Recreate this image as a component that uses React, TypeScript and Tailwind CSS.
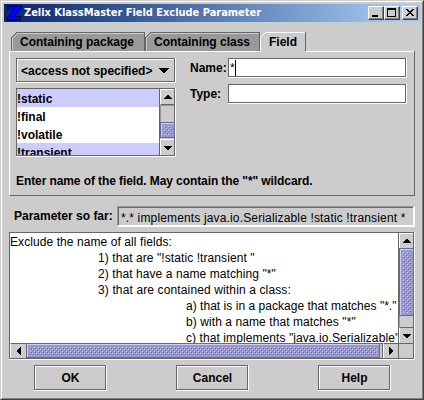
import type { ReactNode } from "react";

type Dir = "up" | "down" | "left" | "right";

const arrowRows = [2, 4, 6, 8];

function Arrow({ dir }: { dir: Dir }) {
  const vertical = dir === "up" || dir === "down";
  const w = vertical ? 8 : 4;
  const h = vertical ? 4 : 8;
  return (
    <svg width={w} height={h} viewBox={`0 0 ${w} ${h}`} shapeRendering="crispEdges">
      {arrowRows.map((size, i) => {
        const along = dir === "up" || dir === "left" ? i : 3 - i;
        const across = (8 - size) / 2;
        return vertical ? (
          <rect key={i} x={across} y={along} width={size} height={1} />
        ) : (
          <rect key={i} x={along} y={across} width={1} height={size} />
        );
      })}
    </svg>
  );
}

function ScrollButton({ dir, className }: { dir: Dir; className: string }) {
  return (
    <div className={`flex shrink-0 items-center justify-center border-t border-l border-white bg-[#cccccc] ${className}`}>
      <Arrow dir={dir} />
    </div>
  );
}

function Thumb({ id, className, inset }: { id: string; className: string; inset: string }) {
  return (
    <div className={`shrink-0 border border-[#666699] ${className}`}>
      <div className={`h-full w-full border-t border-l border-[#ccccff] bg-[#9999cc] ${inset}`}>
        <svg className="block h-full w-full" shapeRendering="crispEdges">
          <defs>
            <pattern id={id} width="4" height="4" patternUnits="userSpaceOnUse">
              <rect x="0" y="0" width="1" height="1" fill="#ccccff" />
              <rect x="2" y="2" width="1" height="1" fill="#ccccff" />
              <rect x="1" y="1" width="1" height="1" fill="#666699" />
              <rect x="3" y="3" width="1" height="1" fill="#666699" />
            </pattern>
          </defs>
          <rect width="100%" height="100%" fill={`url(#${id})`} />
        </svg>
      </div>
    </div>
  );
}

function Caption({ children, gap = "" }: { children: ReactNode; gap?: string }) {
  return (
    <div className={`flex h-[14px] w-4 shrink-0 items-center justify-center border border-t-white border-l-white border-r-[#404040] border-b-[#404040] bg-[#cccccc] shadow-[inset_-1px_-1px_0_#808080] ${gap}`}>
      <svg width="12" height="10" viewBox="0 0 12 10" shapeRendering="crispEdges">
        {children}
      </svg>
    </div>
  );
}

function Tab({ label, width, active = false }: { label: string; width: string; active?: boolean }) {
  return (
    <div className={`relative h-[19px] shrink-0 ${width}`}>
      <svg className="absolute inset-0 h-full w-full" shapeRendering="crispEdges">
        <rect x="6" y="0" width="100%" height="20" fill={active ? "#cccccc" : "#999999"} />
        <path d="M0 20V6L6 0V20Z" fill={active ? "#cccccc" : "#999999"} />
        <path d="M0.5 20V5.5L5.5 0.5" fill="none" stroke={active ? "#ffffff" : "#666666"} />
        <rect x="5" y="0" width="100%" height="1" fill={active ? "#ffffff" : "#666666"} />
        {!active && <path d="M1.5 20V6.5L6.5 1.5H200" fill="none" stroke="#cccccc" />}
      </svg>
      <div className="absolute top-0 right-0 h-[19px] w-px bg-[#666666]" />
      <div className="relative pl-[9px] leading-[20px]">{label}</div>
    </div>
  );
}

function TextField({ children }: { children?: ReactNode }) {
  return (
    <div className="h-5 w-[179px] border-r border-b border-white">
      <div className="flex h-[19px] items-center border border-[#666666] bg-white pl-px font-normal">{children}</div>
    </div>
  );
}

function PushButton({ label }: { label: string }) {
  return (
    <div className="h-[26px] w-[73px] border-r border-b border-white">
      <div className="h-[25px] border border-[#666666]">
        <div className="h-[23px] border-t border-l border-white text-center leading-[23px]">{label}</div>
      </div>
    </div>
  );
}

const modifiers = [
  { name: "!static", selected: true },
  { name: "!final", selected: false },
  { name: "!volatile", selected: false },
  { name: "!transient", selected: true },
];

const description = [
  { text: "Exclude the name of all fields:", indent: "pl-0" },
  { text: '1) that are "!static !transient "', indent: "pl-[88px]" },
  { text: '2) that have a name matching "*"', indent: "pl-[88px]" },
  { text: "3) that are contained within a class:", indent: "pl-[88px] tracking-[0.13px]" },
  { text: 'a) that is in a package that matches "*."', indent: "pl-[176px] tracking-[0.03px]" },
  { text: 'b) with a name that matches "*"', indent: "pl-[176px]" },
  { text: 'c) that implements "java.io.Serializable"', indent: "pl-[176px]" },
];

export default function App() {
  return (
    <div className="h-[400px] w-[424px] overflow-hidden border-t border-r border-b border-l border-t-[#cccccc] border-r-[#404040] border-b-[#404040] border-l-[#cccccc] bg-[#cccccc] font-['Liberation_Sans',Arial,sans-serif] text-[12px] font-bold whitespace-nowrap text-black">
      <div className="flex h-[398px] flex-col border border-t-white border-r-[#808080] border-b-[#808080] border-l-white pt-[2px]">
        <div className="mx-[2px] flex h-[18px] shrink-0 items-center bg-linear-to-r from-[#0a246a] to-[#a6caf0] to-95% pr-[2px] pl-[2px]">
          <svg className="shrink-0" width="17" height="16" viewBox="0 0 17 16">
            <path d="M1.5 0.8H15.2V3.6L8.2 11.4H14.4V15.2H1V12.4L8.4 4.4H1.5Z" fill="#0000ff" stroke="#000000" strokeWidth="0.8" />
          </svg>
          <span className="grow pl-px font-['DejaVu_Sans_Condensed','DejaVu_Sans',sans-serif] text-[11px] leading-[18px] tracking-[-0.03px] text-white">
            Zelix KlassMaster Field Exclude Parameter
          </span>
          <Caption>
            <rect x="2" y="7" width="6" height="2" />
          </Caption>
          <Caption>
            <path d="M1 0H10V9H1ZM2 2V8H9V2Z" fillRule="evenodd" />
          </Caption>
          <Caption gap="ml-[2px]">
            <path d="M2 1h2v1h1v1h2v-1h1v-1h2v1h-1v1h-1v1h-1v1h1v1h1v1h1v1h-2v-1h-1v-1h-2v1h-1v1h-2v-1h1v-1h1v-1h1v-1h-1v-1h-1v-1h-1z" />
          </Caption>
        </div>

        <div className="mt-[10px] ml-[9px] flex shrink-0">
          <Tab label="Containing package" width="w-[134px]" />
          <Tab label="Containing class" width="w-[115px]" />
          <Tab label="Field" width="w-[46px]" active />
        </div>

        <div className="ml-[7px] flex h-[145px] w-[406px] shrink-0 flex-col border-r border-b border-l border-r-[#666666] border-b-[#666666] border-l-white">
          <div className="flex h-px shrink-0">
            <div className="w-[251px] bg-white" />
            <div className="w-[45px]" />
            <div className="grow bg-white" />
          </div>
          <div className="flex pt-[6px] pl-[6px]">
            <div className="w-[160px]">
              <div className="h-[25px] border-r border-b border-white">
                <div className="h-6 border border-[#666666]">
                  <div className="flex h-[22px] items-center justify-between border-t border-l border-white pr-[5px] pl-[3px]">
                    <span className="leading-[22px]">&lt;access not specified&gt;</span>
                    <svg width="10" height="5" viewBox="0 0 10 5" shapeRendering="crispEdges">
                      <path d="M0 0H10V1H9V2H8V3H7V4H6V5H4V4H3V3H2V2H1V1H0Z" />
                    </svg>
                  </div>
                </div>
              </div>
              <div className="mt-[5px] h-[69px] border-r border-b border-white">
                <div className="flex h-[68px] border border-[#666666] bg-white">
                  <div className="h-[66px] w-[142px] overflow-hidden">
                    {modifiers.map((m) => (
                      <div key={m.name} className={m.selected ? "h-[18px] bg-[#ccccff] leading-[20px]" : "h-[18px] leading-[20px]"}>
                        {m.name}
                      </div>
                    ))}
                  </div>
                  <div className="flex w-[15px] flex-col border-l border-[#666666] bg-[#cccccc]">
                    <ScrollButton dir="up" className="h-4 w-full border-b border-b-[#666666]" />
                    <div className="h-[17px] w-full border-t border-l border-t-[#999999] border-l-[#999999]" />
                    <Thumb id="bumps-list" className="h-4 w-[15px]" inset="p-[2px]" />
                    <div className="h-px" />
                    <ScrollButton dir="down" className="h-4 w-full" />
                  </div>
                </div>
              </div>
            </div>
            <div className="ml-[14px] flex flex-col gap-[5px]">
              <div className="flex">
                <span className="w-[38px] leading-[21px]">Name:</span>
                <TextField>
                  <span className="leading-[18px]">*</span>
                  <span className="h-4 w-px bg-black" />
                </TextField>
              </div>
              <div className="flex">
                <span className="w-[38px] leading-[21px]">Type:</span>
                <TextField />
              </div>
            </div>
          </div>
          <div className="mt-4 pl-[6px] leading-4 tracking-[-0.09px]">Enter name of the field. May contain the "*" wildcard.</div>
        </div>

        <div className="mt-[10px] flex h-[21px] shrink-0 pl-[12px]">
          <span className="w-[103px] leading-[21px]">Parameter so far:</span>
          <div className="w-[298px] border-t border-r-2 border-b-2 border-l border-t-[#999999] border-r-white border-b-white border-l-[#999999]">
            <div className="h-[18px] border-t border-l border-[#666666] pl-[2px] leading-[20px] font-normal tracking-[0.15px]">
              *.* implements java.io.Serializable !static !transient *
            </div>
          </div>
        </div>

        <div className="mt-[5px] ml-[7px] h-[128px] w-[406px] shrink-0 border-r border-b border-white">
          <div className="flex h-[127px] flex-col border border-[#666666] bg-[#cccccc]">
            <div className="flex h-[110px]">
              <div className="w-[388px] shrink-0 overflow-hidden bg-white pt-px font-normal tracking-[0.08px]">
                {description.map((line) => (
                  <div key={line.text} className={`h-4 leading-[17px] ${line.indent}`}>
                    {line.text}
                  </div>
                ))}
              </div>
              <div className="flex w-[15px] flex-col border-l border-[#666666]">
                <ScrollButton dir="up" className="h-[15px] w-full" />
                <Thumb id="bumps-vertical" className="h-[68px] w-[15px]" inset="p-[2px]" />
                <div className="h-[11px] border-l border-[#999999]" />
                <ScrollButton dir="down" className="h-4 w-full border-t-[#666666]" />
              </div>
            </div>
            <div className="flex h-[15px]">
              <ScrollButton dir="left" className="h-[15px] w-4 border-t-[#666666]" />
              <Thumb id="bumps-horizontal" className="h-[15px] w-[354px]" inset="p-[2px]" />
              <div className="w-[3px] border-t border-r border-[#666666]" />
              <ScrollButton dir="right" className="h-[15px] w-[15px] border-t-[#666666]" />
              <div className="h-[15px] w-[15px] border-t border-l border-[#666666]" />
            </div>
          </div>
        </div>

        <div className="mt-[5px] flex gap-[69px] pl-[32px]">
          <PushButton label="OK" />
          <PushButton label="Cancel" />
          <PushButton label="Help" />
        </div>
      </div>
    </div>
  );
}
